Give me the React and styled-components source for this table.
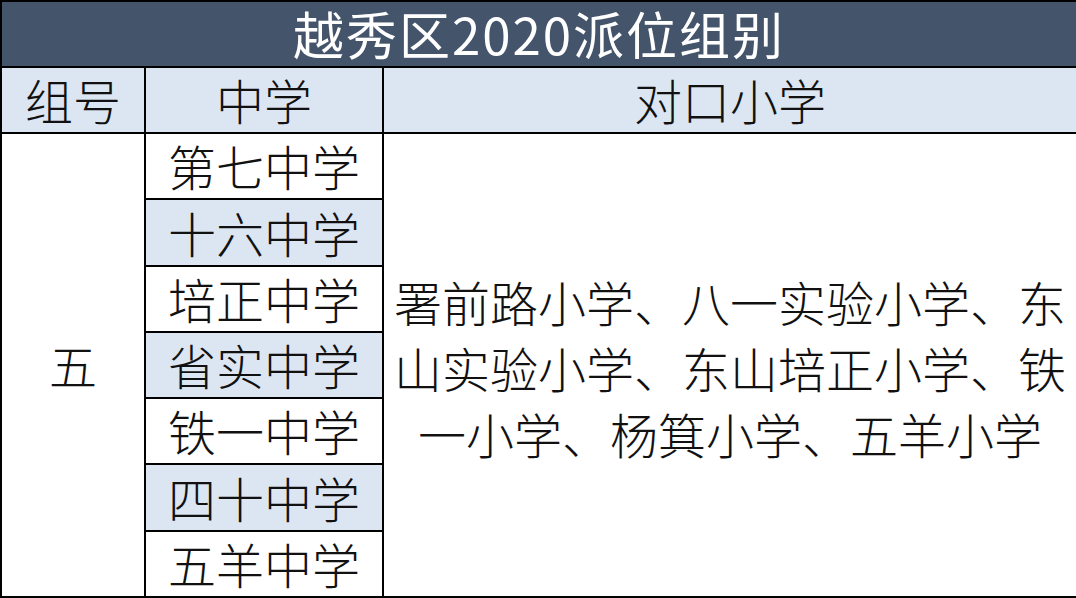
import React from 'react';
import styled, { createGlobalStyle } from 'styled-components';

const GlobalStyle = createGlobalStyle`
  html, body {
    margin: 0;
    padding: 0;
    background: #ffffff;
  }
  body {
    font-family: "Noto Sans CJK SC", "Noto Sans", sans-serif;
  }
`;

const schools = [
  { name: '第七中学', shaded: false },
  { name: '十六中学', shaded: true },
  { name: '培正中学', shaded: false },
  { name: '省实中学', shaded: true },
  { name: '铁一中学', shaded: false },
  { name: '四十中学', shaded: true },
  { name: '五羊中学', shaded: false },
];

const primaryLines = [
  '署前路小学、八一实验小学、东',
  '山实验小学、东山培正小学、铁',
  '一小学、杨箕小学、五羊小学',
];

const Table = styled.div`
  width: 1076px;
  height: 598px;
  box-sizing: border-box;
  border-left: 2px solid #000;
  border-top: 2px solid #000;
  border-bottom: 2px solid #000;
  background: #000;
  display: grid;
  grid-template-columns: 142px 236px 1fr;
  grid-template-rows: 64px 64px repeat(7, 1fr);
  gap: 2px;
`;

const Title = styled.div`
  grid-column: 1 / -1;
  background: #44546a;
  color: #ffffff;
  font-size: 51px;
  font-weight: 400;
  letter-spacing: 2px;
  display: flex;
  align-items: center;
  justify-content: center;
  white-space: nowrap;
  overflow: visible;
`;

const TitleText = styled.span`
  line-height: 1.25;
`;

const Cell = styled.div`
  background: ${(p) => (p.$shaded ? '#dce6f2' : '#ffffff')};
  color: #111;
  font-size: 48px;
  font-weight: 300;
  line-height: 1.2;
  display: flex;
  align-items: center;
  justify-content: center;
  text-align: center;
  grid-row: ${(p) => p.$rows || 'auto'};
  grid-column: ${(p) => p.$col || 'auto'};
`;

const PrimaryText = styled.div`
  padding: 4px 8px 0;
  line-height: 66px;
  white-space: nowrap;
`;

export default function App() {
  return (
    <>
      <GlobalStyle />
      <Table>
        <Title>
          <TitleText>越秀区2020派位组别</TitleText>
        </Title>
        <Cell $shaded>组号</Cell>
        <Cell $shaded>中学</Cell>
        <Cell $shaded>对口小学</Cell>
        <Cell $col="1" $rows="3 / 10">五</Cell>
        {schools.map((s, i) => (
          <Cell key={s.name} $col="2" $rows={`${i + 3}`} $shaded={s.shaded}>
            {s.name}
          </Cell>
        ))}
        <Cell $col="3" $rows="3 / 10">
          <PrimaryText>
            {primaryLines.map((l) => (
              <div key={l}>{l}</div>
            ))}
          </PrimaryText>
        </Cell>
      </Table>
    </>
  );
}
